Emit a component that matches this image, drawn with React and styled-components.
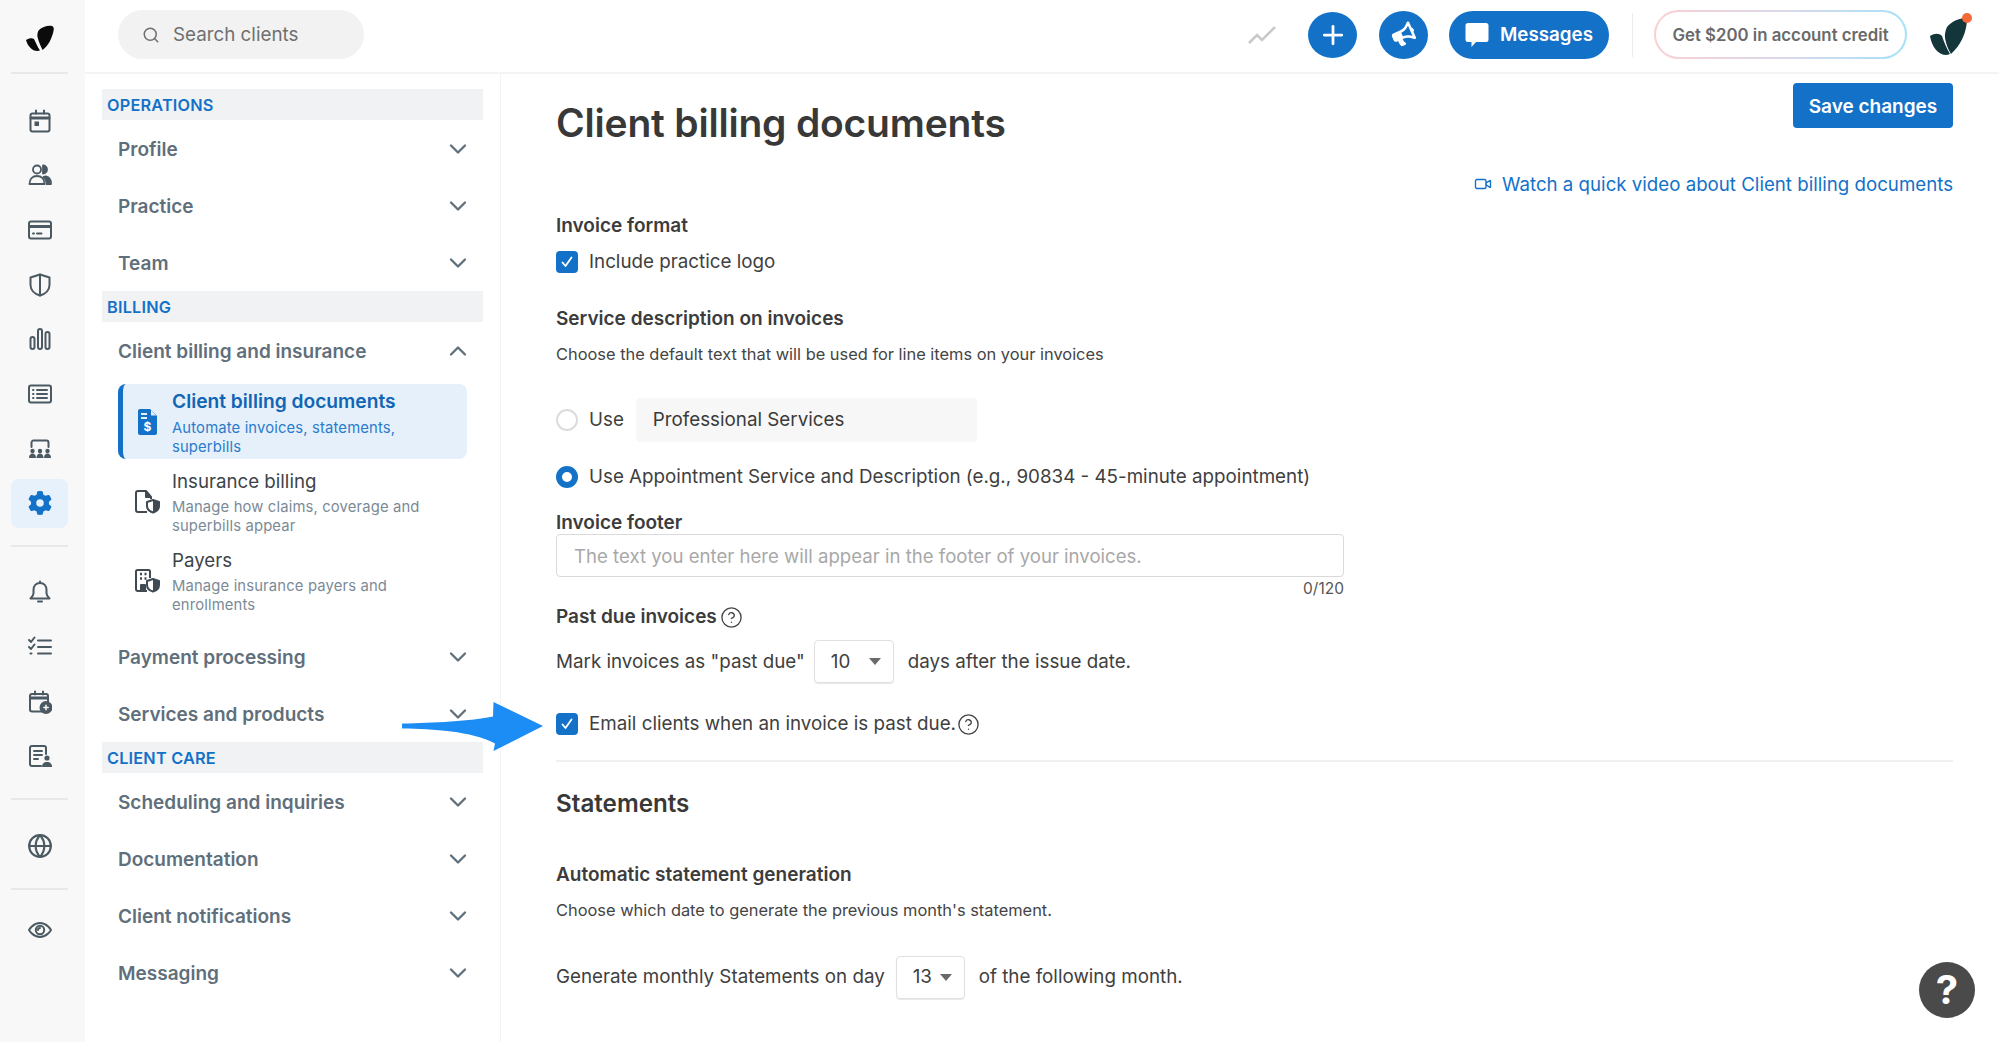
import React from "react";
import styled, { createGlobalStyle } from "styled-components";
import { Search, ChevronDown, ChevronUp, Plus, Globe, Video, CircleHelp } from "lucide-react";
import { FaGear } from "react-icons/fa6";
import { FaBullhorn } from "react-icons/fa";

const BLUE = "#1371c8";
const SLATE = "#5f6f7b";
const ICON = "#4b5962";

const Global = createGlobalStyle`
  html, body { margin: 0; padding: 0; background: #fff; }
  body { font-family: Inter, "Noto Sans", "Liberation Sans", sans-serif; color: #333; overflow: hidden; }
  * { box-sizing: border-box; }
`;

const Page = styled.div`
  position: relative; display: flex; width: 1999px; height: 1042px; overflow: hidden;
`;
const Rail = styled.nav`
  width: 85px; flex: none; background: #f8f8f8; display: flex; flex-direction: column; align-items: flex-start; padding-left: 11px;
`;
const RailLogo = styled.div`
  height: 72px; display: flex; align-items: center; justify-content: center; padding-top: 6px; width: 57px;
`;
const RailRule = styled.hr`
  width: 57px; height: 2px; border: 0; background: #e8e8e8; margin: ${p => p.$m || "0"}; flex: none;
`;
const RailGroup = styled.div`
  display: flex; flex-direction: column; gap: ${p => p.$gap || "5.7px"}; margin-top: ${p => p.$top};
`;
const RailItem = styled.div`
  width: 57px; height: 49px; border-radius: 8px; display: flex; align-items: center; justify-content: center;
  color: ${p => (p.$active ? BLUE : ICON)}; background: ${p => (p.$active ? "#e6f1fb" : "transparent")};
`;
const Right = styled.div`
  flex: 1; min-width: 0; display: flex; flex-direction: column;
`;
const Header = styled.header`
  height: 74px; flex: none; display: flex; align-items: center; padding: 0 27px 3px 33px; border-bottom: 2px solid #f4f4f4;
`;
const SearchBox = styled.div`
  width: 246px; height: 49px; border-radius: 25px; background: #f2f2f2; display: flex; align-items: center;
  padding-left: 24px; gap: 13px; color: #6f6f6f; font-size: 18.800px; flex: none;
`;
const Spacer = styled.div` flex: 1; `;
const CircleBtn = styled.div`
  width: 49px; height: ${p => p.$h || "48px"}; border-radius: 50%; background: ${BLUE}; color: #fff; display: flex;
  align-items: center; justify-content: center; margin-left: ${p => p.$ml || "22px"}; flex: none;
`;
const MegaIcon = styled(FaBullhorn)`
  transform: rotate(-24deg);
`;
const MsgBtn = styled.div`
  width: 160px; height: 48px; border-radius: 24px; background: ${BLUE}; color: #fff; display: flex; align-items: center;
  justify-content: center; gap: 11px; font-size: 18.800px; font-weight: 600; margin-left: 21px; flex: none;
`;
const VRule = styled.div`
  width: 1px; height: 44px; background: #ececec; margin: 0 21px 0 23px; flex: none;
`;
const CreditBtn = styled.div`
  width: 253px; height: 49px; border-radius: 25px; border: 2px solid transparent; display: flex; align-items: center;
  justify-content: center; font-size: 16.800px; font-weight: 600; color: #6a6a6a; flex: none;
  background: linear-gradient(#fff, #fff) padding-box, linear-gradient(90deg, #fbd0d3, #dcd8ea 50%, #a5e2f7) border-box;
`;
const Avatar = styled.div`
  margin-left: 23px; width: 42px; height: 44px; flex: none; display: flex;
`;
const Body = styled.div`
  flex: 1; display: flex; min-height: 0;
`;
const Side = styled.aside`
  width: 416px; flex: none; border-right: 1px solid #f3f3f3; padding: 15px 0 0 17px;
`;
const SectionHead = styled.div`
  width: 381px; height: 31px; background: #f1f2f4; color: ${BLUE}; font-size: 16.300px; font-weight: 600;
  display: flex; align-items: center; padding-left: 5px; letter-spacing: 0.2px;
`;
const NavRow = styled.div`
  width: 381px; height: 57px; display: flex; align-items: center; justify-content: space-between;
  padding: 1px 11px 0 16px; color: ${SLATE}; font-size: 19px; font-weight: 600; margin-top: ${p => p.$top || 0};
`;
const SubItem = styled.div`
  width: 349px; height: 75px; margin: ${p => p.$m || "0"} 0 0 16px; display: grid; grid-template-columns: 49px 1fr;
  border-left: 5px solid ${p => (p.$active ? BLUE : "transparent")}; border-radius: 8px;
  background: ${p => (p.$active ? "#e5f0fa" : "transparent")};
`;
const SubIcon = styled.div`
  display: flex; align-items: center; justify-content: center; color: ${p => (p.$active ? BLUE : "#3f4a52")};
`;
const SubText = styled.div`
  padding: ${p => (p.$active ? "7px" : "8px")} 17px 0 0;
`;
const SubTitle = styled.div`
  font-size: ${p => (p.$active ? "19.200px" : "18.700px")}; line-height: 20px; font-weight: ${p => (p.$active ? 600 : 400)};
  color: ${p => (p.$active ? "#1265b4" : "#3d4449")};
`;
const SubDesc = styled.div`
  font-size: 14.800px; line-height: 19px; margin-top: ${p => (p.$active ? "7.5px" : "6px")}; letter-spacing: 0.15px;
  color: ${p => (p.$active ? "#2a7bcb" : "#7b8a95")};
`;
const Main = styled.main`
  flex: 1; min-width: 0; padding: 9px 46px 0 55px;
`;
const TopRow = styled.div`
  display: flex; justify-content: space-between; align-items: flex-start; height: 89px;
`;
const Title = styled.h1`
  margin: 16px 0 0; font-size: 39px; line-height: 48px; font-weight: 600; color: #383838; letter-spacing: -0.2px;
`;
const SaveBtn = styled.div`
  width: 160px; height: 45px; border-radius: 4px; background: ${BLUE}; color: #fff; font-size: 19px; font-weight: 600;
  display: flex; align-items: center; justify-content: center; padding-top: 1px;
`;
const WatchRow = styled.div`
  display: flex; justify-content: flex-end; align-items: center; gap: 10px; height: 24px; color: ${BLUE}; font-size: 18.700px;
`;
const Label = styled.div`
  font-size: 19px; line-height: ${p => p.$lh || "24px"}; font-weight: 600; color: #3c3c3c; margin-top: ${p => p.$top};
  display: flex; align-items: center; gap: 3px;
`;
const Hint = styled.div`
  font-size: 16.400px; line-height: 22px; color: #444; margin-top: 12px;
`;
const Line = styled.div`
  display: flex; align-items: center; gap: 11px; font-size: 18.800px; line-height: 24px; color: #404040; margin-top: ${p => p.$top};
  height: ${p => p.$h || "24px"};
`;
const CheckBox = styled.span`
  width: 22px; height: 22px; border-radius: 4px; background: ${BLUE}; display: inline-flex; align-items: center; justify-content: center; flex: none;
`;
const Radio = styled.span`
  width: 22px; height: 22px; border-radius: 50%; flex: none; background: #fff;
  border: ${p => (p.$on ? `6.5px solid ${BLUE}` : "2px solid #dcdcdc")};
`;
const FakeInput = styled.div`
  width: 341px; height: 44px; border-radius: 4px; background: #f7f7f7; display: flex; align-items: center; padding-left: 17px;
  color: #3a3a3a; margin-left: 1px;
`;
const FooterInput = styled.div`
  width: 788px; height: 43px; border: 1px solid #dadada; border-radius: 4px; display: flex; align-items: center; padding-left: 17px;
  color: #a8a8a8; font-size: 18.600px;
`;
const Counter = styled.div`
  width: 788px; text-align: right; font-size: 15.500px; line-height: 20px; color: #555; margin-top: 2px;
`;
const Select = styled.div`
  width: ${p => p.$w}; height: 43px; border: 1px solid #e0e0e0; border-radius: 4px; display: flex; align-items: center;
  justify-content: space-between; padding: 0 12px 0 16px; margin: 0 3px 0 ${p => p.$ml}; box-shadow: 0 1px 1px #e8e8e8;
`;
const Caret = styled.span`
  width: 0; height: 0; border-left: 6px solid transparent; border-right: 6px solid transparent; border-top: 7px solid #6a6a6a;
`;
const Rule = styled.hr`
  border: 0; height: 2px; background: #f0f0f0; margin: 24px 0 0;
`;
const Statements = styled.h2`
  margin: 26px 0 0; font-size: 24.200px; line-height: 32px; font-weight: 600; color: #383838;
`;
const EmailHelp = styled(CircleHelp)`
  margin-left: -10px;
`;
const HelpBtn = styled.div`
  position: absolute; left: 1919px; top: 962px; width: 56px; height: 56px; border-radius: 50%; background: #4a4a4a; color: #fff;
  display: flex; align-items: center; justify-content: center; font-size: 40px; font-weight: 700; line-height: 1;
`;
const ArrowMark = styled.svg`
  position: absolute; left: 402px; top: 702px;
`;

const Ico = ({ children, size = 24, vb = "0 0 24 24", sw = 2 }) => (
  <svg width={size} height={size} viewBox={vb} fill="none" stroke="currentColor" strokeWidth={sw} strokeLinecap="round" strokeLinejoin="round">{children}</svg>
);

const LOBE = "M1 16c3-2 6-2.500 8-1 1.500 3 3.500 8 6 11.500-6 2-12-3-14-10.500z";
const LEAF = "M14 6c3-3 9-5 13-4 2 .5 2 3 1.500 5-1.500 7-5 15-11 19-2-4-4-9-5-13-.3-2.500 0-5 1.500-7z";

const LogoMark = () => (
  <svg width="30" height="30" viewBox="0 0 30 30" fill="#0b0b0b"><path d={LEAF} /><path d={LOBE} /></svg>
);

const railTop = [
  <Ico key="cal"><rect x="2.500" y="4.500" width="19" height="18" rx="2" /><path d="M3 9h18" strokeWidth="3" /><path d="M8 1.500v3M16 1.500v3" /><rect x="6.500" y="12.500" width="4.500" height="4.500" fill="currentColor" stroke="none" /></Ico>,
  <Ico key="ppl" sw={1.800}><circle cx="9" cy="6.500" r="4" /><path d="M1.500 21c0-5 3-8 7.500-8s7.500 3 7.500 8z" /><path d="M15 2.500a4 4 0 010 8z" fill="currentColor" /><path d="M18 13.500c3 .6 5 3.500 5 7.500h-4.500c0-3-1-5.500-3-7z" fill="currentColor" /></Ico>,
  <Ico key="card"><rect x="1" y="3.500" width="22" height="17" rx="2" /><path d="M2 8.500h20" strokeWidth="3" /><path d="M5 15.500h1M9 15.500h4.500" /></Ico>,
  <Ico key="shield"><path d="M12 1.500l9.500 3v7.500c0 5-4 9-9.500 10.500C6.500 21 2.500 17 2.500 12V4.500z" /><path d="M12 1.500v21" /></Ico>,
  <Ico key="bars"><rect x="2.500" y="10" width="4" height="12" rx="2" /><rect x="10" y="2" width="4" height="20" rx="2" /><rect x="17.500" y="5" width="4" height="17" rx="2" /></Ico>,
  <Ico key="list"><rect x="1" y="3.500" width="22" height="17" rx="2" /><path d="M9 8h10M9 12h10M9 16h10M5 8h.5M5 12h.5M5 16h.5" /></Ico>,
  <Ico key="room"><path d="M3.500 10V5.500a2 2 0 012-2h13a2 2 0 012 2V10" /><g fill="currentColor" stroke="none"><circle cx="4.500" cy="14" r="2.200" /><circle cx="12" cy="14" r="2.200" /><circle cx="19.500" cy="14" r="2.200" /><path d="M1 21c0-3 1.500-4.500 3.500-4.500S8 18 8 21zM8.500 21c0-3 1.500-4.500 3.500-4.500s3.500 1.500 3.500 4.500zM16 21c0-3 1.500-4.500 3.500-4.500S23 18 23 21z" /></g></Ico>,
];

const NavLine = ({ label, up, top }) => (
  <NavRow $top={top}>
    {label}
    {up ? <ChevronUp size={28} strokeWidth={2} /> : <ChevronDown size={28} strokeWidth={2} />}
  </NavRow>
);

const Tick = () => (
  <svg width="14" height="14" viewBox="0 0 14 14" fill="none" stroke="#fff" strokeWidth="1.800" strokeLinecap="round" strokeLinejoin="round"><path d="M2.500 7.500l3 3.500 6-8.500" /></svg>
);

export default function App() {
  return (
    <Page>
      <Global />
      <Rail>
        <RailLogo><LogoMark /></RailLogo>
        <RailRule />
        <RailGroup $top="22px">
          {railTop.map((icon, i) => <RailItem key={i}>{icon}</RailItem>)}
          <RailItem $active><FaGear size={24} /></RailItem>
        </RailGroup>
        <RailRule $m="17px 0 0" />
        <RailGroup $top="21px">
          <RailItem>
            <Ico><path d="M12 3c-4 0-6.500 3-6.500 7v3.500c0 2-1.500 3.500-3 5h19c-1.500-1.500-3-3-3-5V10c0-4-2.500-7-6.500-7z" /><path d="M12 1.500V3M10 21.500h4" /></Ico>
          </RailItem>
          <RailItem>
            <Ico><path d="M1 5l2 2 3.500-4.500M1 12l2 2 3.500-4.500M2.500 18.500h1" /><path d="M10 5.500h13M10 12h13M10 18.500h13" /></Ico>
          </RailItem>
          <RailItem>
            <Ico><path d="M15 21.500H4a2 2 0 01-2-2V6a2 2 0 012-2h14a2 2 0 012 2v6" /><path d="M3 8h16" strokeWidth="3" /><path d="M7 1.500v3M15 1.500v3" /><circle cx="18" cy="17.500" r="5.500" fill="currentColor" /><path d="M18 15.300v4.400M15.800 17.500h4.400" stroke="#f8f8f8" strokeWidth="1.500" /></Ico>
          </RailItem>
          <RailItem>
            <Ico><path d="M13 22H4a2 2 0 01-2-2V4a2 2 0 012-2h12a2 2 0 012 2v6" /><path d="M6 7h8M6 11h8M6 15h4" /><circle cx="19" cy="14" r="2.600" fill="currentColor" stroke="none" /><path d="M14 23c0-3.500 2-5 5-5s5 1.500 5 5z" fill="currentColor" stroke="none" /></Ico>
          </RailItem>
        </RailGroup>
        <RailRule $m="17px 0 0" />
        <RailGroup $top="22px"><RailItem><Globe size={26} strokeWidth={2} /></RailItem></RailGroup>
        <RailRule $m="17px 0 0" />
        <RailGroup $top="16px">
          <RailItem>
            <Ico><path d="M1 12S5 5 12 5s11 7 11 7-4 7-11 7S1 12 1 12z" /><circle cx="12" cy="12" r="4.200" /><path d="M10 12a2 2 0 012-2" /></Ico>
          </RailItem>
        </RailGroup>
      </Rail>
      <Right>
        <Header>
          <SearchBox><Search size={18} strokeWidth={2} />Search clients</SearchBox>
          <Spacer />
          <svg width="28" height="18" viewBox="0 0 28 18" fill="none" stroke="#c9c9c9" strokeWidth="2.500"><path d="M1 17l8-8 5 5L27 1" /></svg>
          <CircleBtn $ml="32px" $h="46px"><Plus size={30} strokeWidth={2.200} /></CircleBtn>
          <CircleBtn><MegaIcon size={23} /></CircleBtn>
          <MsgBtn>
            <svg width="24" height="26" viewBox="0 0 24 26" fill="#fff"><path d="M3 1h18a2.500 2.500 0 012.500 2.500v14A2.500 2.500 0 0121 20H11l-4.500 5V20H3a2.500 2.500 0 01-2.500-2.500v-14A2.500 2.500 0 013 1z" /></svg>
            Messages
          </MsgBtn>
          <VRule />
          <CreditBtn>Get $200 in account credit</CreditBtn>
          <Avatar>
            <svg width="42" height="44" viewBox="0 0 42 44" fill="#12363a">
              <path d="M17 14c4-5 10-8 17-9 3 0 3 4 2.500 7C35 22 30 33 21 41c-3-5-5-10-6-16-.5-4 .5-8 2-11z" />
              <path d="M0 23c5-3 9-3 12 0 2 6 5 13 8 18C10 45 2 35 0 23z" />
              <circle cx="37" cy="5" r="5" fill="#f4693a" />
            </svg>
          </Avatar>
        </Header>
        <Body>
          <Side>
            <SectionHead>OPERATIONS</SectionHead>
            <NavLine label="Profile" />
            <NavLine label="Practice" />
            <NavLine label="Team" />
            <SectionHead>BILLING</SectionHead>
            <NavLine label="Client billing and insurance" up />
            <SubItem $active $m="5px">
              <SubIcon $active>
                <svg width="20" height="26" viewBox="0 0 20 26"><path d="M2 0h10l7 7v17a2 2 0 01-2 2H2a2 2 0 01-2-2V2a2 2 0 012-2z" fill="currentColor" /><path d="M13 1l5 5.500h-5z" fill="#e5f0fa" /><path d="M3 5h6M3 9h6" stroke="#e5f0fa" strokeWidth="1.800" /><text x="9.500" y="21.500" fontSize="12" fontWeight="700" fill="#fff" textAnchor="middle" fontFamily="Inter, sans-serif">$</text></svg>
              </SubIcon>
              <SubText $active>
                <SubTitle $active>Client billing documents</SubTitle>
                <SubDesc $active>Automate invoices, statements, superbills</SubDesc>
              </SubText>
            </SubItem>
            <SubItem $m="5px">
              <SubIcon>
                <svg width="26" height="24" viewBox="0 0 26 24" fill="none" stroke="currentColor" strokeWidth="2" strokeLinejoin="round"><path d="M12 22H3a2 2 0 01-2-2V3a2 2 0 012-2h8l5 6v2" /><path d="M11 1v6h5" fill="currentColor" /><path d="M18 10l6 2v4c0 3-2.500 5.500-6 6.500-3.500-1-6-3.500-6-6.500v-4z" fill="#fff" /><path d="M18 10v12.500a7 7 0 006-6.500v-4z" fill="currentColor" stroke="none" /></svg>
              </SubIcon>
              <SubText>
                <SubTitle>Insurance billing</SubTitle>
                <SubDesc>Manage how claims, coverage and superbills appear</SubDesc>
              </SubText>
            </SubItem>
            <SubItem $m="4px">
              <SubIcon>
                <svg width="26" height="24" viewBox="0 0 26 24" fill="none" stroke="currentColor" strokeWidth="2" strokeLinejoin="round"><path d="M12 22H3a2 2 0 01-2-2V2.500A1.500 1.500 0 012.500 1h11A1.500 1.500 0 0115 2.500V9" /><path d="M5 5h2M9.500 5h2M5 9.500h2M9.500 9.500h2" strokeWidth="2.400" /><path d="M6 22v-6h4v6" fill="currentColor" /><path d="M18 10l6 2v4c0 3-2.500 5.500-6 6.500-3.500-1-6-3.500-6-6.500v-4z" fill="#fff" /><path d="M18 10v12.500a7 7 0 006-6.500v-4z" fill="currentColor" stroke="none" /></svg>
              </SubIcon>
              <SubText>
                <SubTitle>Payers</SubTitle>
                <SubDesc>Manage insurance payers and enrollments</SubDesc>
              </SubText>
            </SubItem>
            <NavLine label="Payment processing" top="10px" />
            <NavLine label="Services and products" />
            <SectionHead>CLIENT CARE</SectionHead>
            <NavLine label="Scheduling and inquiries" />
            <NavLine label="Documentation" />
            <NavLine label="Client notifications" />
            <NavLine label="Messaging" />
          </Side>
          <Main>
            <TopRow>
              <Title>Client billing documents</Title>
              <SaveBtn>Save changes</SaveBtn>
            </TopRow>
            <WatchRow><Video size={18} strokeWidth={1.800} />Watch a quick video about Client billing documents</WatchRow>
            <Label $top="18px">Invoice format</Label>
            <Line $top="12px"><CheckBox><Tick /></CheckBox>Include practice logo</Line>
            <Label $top="33px">Service description on invoices</Label>
            <Hint>Choose the default text that will be used for line items on your invoices</Hint>
            <Line $top="33px" $h="44px"><Radio />Use<FakeInput>Professional Services</FakeInput></Line>
            <Line $top="23px"><Radio $on />Use Appointment Service and Description (e.g., 90834 - 45-minute appointment)</Line>
            <Label $top="23px" $lh="22px">Invoice footer</Label>
            <FooterInput>The text you enter here will appear in the footer of your invoices.</FooterInput>
            <Counter>0/120</Counter>
            <Label $top="6px">Past due invoices <CircleHelp size={23} strokeWidth={1.400} color="#444" /></Label>
            <Line $top="11px" $h="43px">Mark invoices as "past due"<Select $w="80px" $ml="-2px">10<Caret /></Select>days after the issue date.</Line>
            <Line $top="29px"><CheckBox><Tick /></CheckBox>Email clients when an invoice is past due.<EmailHelp size={23} strokeWidth={1.400} color="#444" /></Line>
            <Rule />
            <Statements>Statements</Statements>
            <Label $top="43px">Automatic statement generation</Label>
            <Hint>Choose which date to generate the previous month's statement.</Hint>
            <Line $top="34px" $h="44px">Generate monthly Statements on day<Select $w="69px" $ml="0">13<Caret /></Select>of the following month.</Line>
          </Main>
        </Body>
      </Right>
      <ArrowMark width="142" height="50" viewBox="0 0 142 50" fill="#1b8df5">
        <path d="M1 21.500C30 21 70 19 91 14.500L91.500 0 141 24 91.500 49 93 41.500C70 29 30 27 1 26.500a2.500 2.500 0 010-5z" />
      </ArrowMark>
      <HelpBtn>?</HelpBtn>
    </Page>
  );
}
